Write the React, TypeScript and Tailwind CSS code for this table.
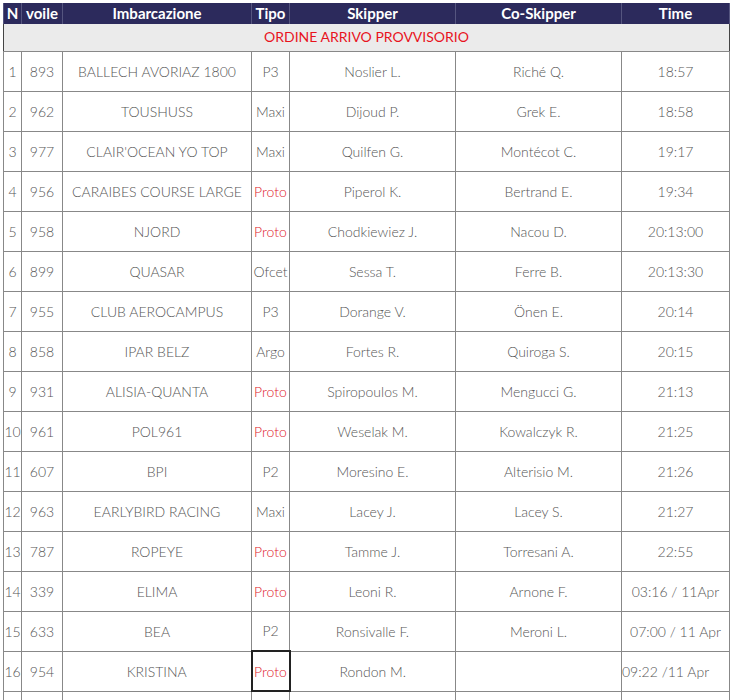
import React from "react";

interface Row {
  n: number;
  voile: string;
  boat: string;
  tipo: string;
  skipper: string;
  coSkipper: string;
  time: string;
}

const rows: Row[] = [
  { n: 1, voile: "893", boat: "BALLECH AVORIAZ 1800", tipo: "P3", skipper: "Noslier L.", coSkipper: "Riché Q.", time: "18:57" },
  { n: 2, voile: "962", boat: "TOUSHUSS", tipo: "Maxi", skipper: "Dijoud P.", coSkipper: "Grek E.", time: "18:58" },
  { n: 3, voile: "977", boat: "CLAIR'OCEAN YO TOP", tipo: "Maxi", skipper: "Quilfen G.", coSkipper: "Montécot C.", time: "19:17" },
  { n: 4, voile: "956", boat: "CARAIBES COURSE LARGE", tipo: "Proto", skipper: "Piperol K.", coSkipper: "Bertrand E.", time: "19:34" },
  { n: 5, voile: "958", boat: "NJORD", tipo: "Proto", skipper: "Chodkiewiez J.", coSkipper: "Nacou D.", time: "20:13:00" },
  { n: 6, voile: "899", boat: "QUASAR", tipo: "Ofcet", skipper: "Sessa T.", coSkipper: "Ferre B.", time: "20:13:30" },
  { n: 7, voile: "955", boat: "CLUB AEROCAMPUS", tipo: "P3", skipper: "Dorange V.", coSkipper: "Önen E.", time: "20:14" },
  { n: 8, voile: "858", boat: "IPAR BELZ", tipo: "Argo", skipper: "Fortes R.", coSkipper: "Quiroga S.", time: "20:15" },
  { n: 9, voile: "931", boat: "ALISIA-QUANTA", tipo: "Proto", skipper: "Spiropoulos M.", coSkipper: "Mengucci G.", time: "21:13" },
  { n: 10, voile: "961", boat: "POL961", tipo: "Proto", skipper: "Weselak M.", coSkipper: "Kowalczyk R.", time: "21:25" },
  { n: 11, voile: "607", boat: "BPI", tipo: "P2", skipper: "Moresino E.", coSkipper: "Alterisio M.", time: "21:26" },
  { n: 12, voile: "963", boat: "EARLYBIRD RACING", tipo: "Maxi", skipper: "Lacey J.", coSkipper: "Lacey S.", time: "21:27" },
  { n: 13, voile: "787", boat: "ROPEYE", tipo: "Proto", skipper: "Tamme J.", coSkipper: "Torresani A.", time: "22:55" },
  { n: 14, voile: "339", boat: "ELIMA", tipo: "Proto", skipper: "Leoni R.", coSkipper: "Arnone F.", time: "03:16 / 11Apr" },
  { n: 15, voile: "633", boat: "BEA", tipo: "P2", skipper: "Ronsivalle F.", coSkipper: "Meroni L.", time: "07:00 / 11 Apr" },
  { n: 16, voile: "954", boat: "KRISTINA", tipo: "Proto", skipper: "Rondon M.", coSkipper: "", time: "09:22 /11 Apr" },
  { n: 17, voile: "", boat: "", tipo: "", skipper: "", coSkipper: "", time: "" },
];

const headers = ["N", "voile", "Imbarcazione", "Tipo", "Skipper", "Co-Skipper", "Time"];

export default function App() {
  return (
    <div className="min-h-[700px] bg-white pl-[3px] pt-[3px] font-['Lato',sans-serif]">
      <table className="w-[726px] table-fixed border-collapse border-x border-[#444]">
        <colgroup>
          <col className="w-[18px]" />
          <col className="w-[41px]" />
          <col className="w-[189px]" />
          <col className="w-[38px]" />
          <col className="w-[166px]" />
          <col className="w-[166px]" />
          <col className="w-[108px]" />
        </colgroup>
        <thead>
          <tr className="h-[21px] bg-[#2c2a5c]">
            {headers.map((h) => (
              <th
                key={h}
                className="border-x border-[#55557f] p-0 text-center text-[15px] font-bold leading-[21px] text-white"
              >
                {h}
              </th>
            ))}
          </tr>
        </thead>
        <tbody>
          <tr className="h-[27px] bg-[#ebebeb]">
            <td
              colSpan={7}
              className="border-b border-[#888] p-0 text-center text-[14px] leading-[20px] text-[#e8131d]"
            >
              ORDINE ARRIVO PROVVISORIO
            </td>
          </tr>
          {rows.map((r) => (
            <tr key={r.n} className="h-[40px] text-[14px] font-light text-[#555]">
              <td className="overflow-visible whitespace-nowrap border border-[#888] p-0 text-center">
                {r.voile ? r.n : ""}
              </td>
              <td className="border border-[#888] p-0 text-center">{r.voile}</td>
              <td className="border border-[#888] p-0 text-center">{r.boat}</td>
              <td
                className={
                  r.n === 16
                    ? "border-2 border-[#222] p-0 text-center text-[#e0202a]"
                    : r.tipo === "Proto"
                      ? "border border-[#888] p-0 text-center text-[#e0202a]"
                      : "border border-[#888] p-0 text-center"
                }
              >
                {r.tipo}
              </td>
              <td className="border border-[#888] p-0 text-center">{r.skipper}</td>
              <td className="border border-[#888] p-0 text-center">{r.coSkipper}</td>
              <td
                className={
                  r.n === 16
                    ? "whitespace-nowrap border border-[#888] p-0 text-left"
                    : "whitespace-nowrap border border-[#888] p-0 text-center"
                }
              >
                {r.time}
              </td>
            </tr>
          ))}
        </tbody>
      </table>
    </div>
  );
}
